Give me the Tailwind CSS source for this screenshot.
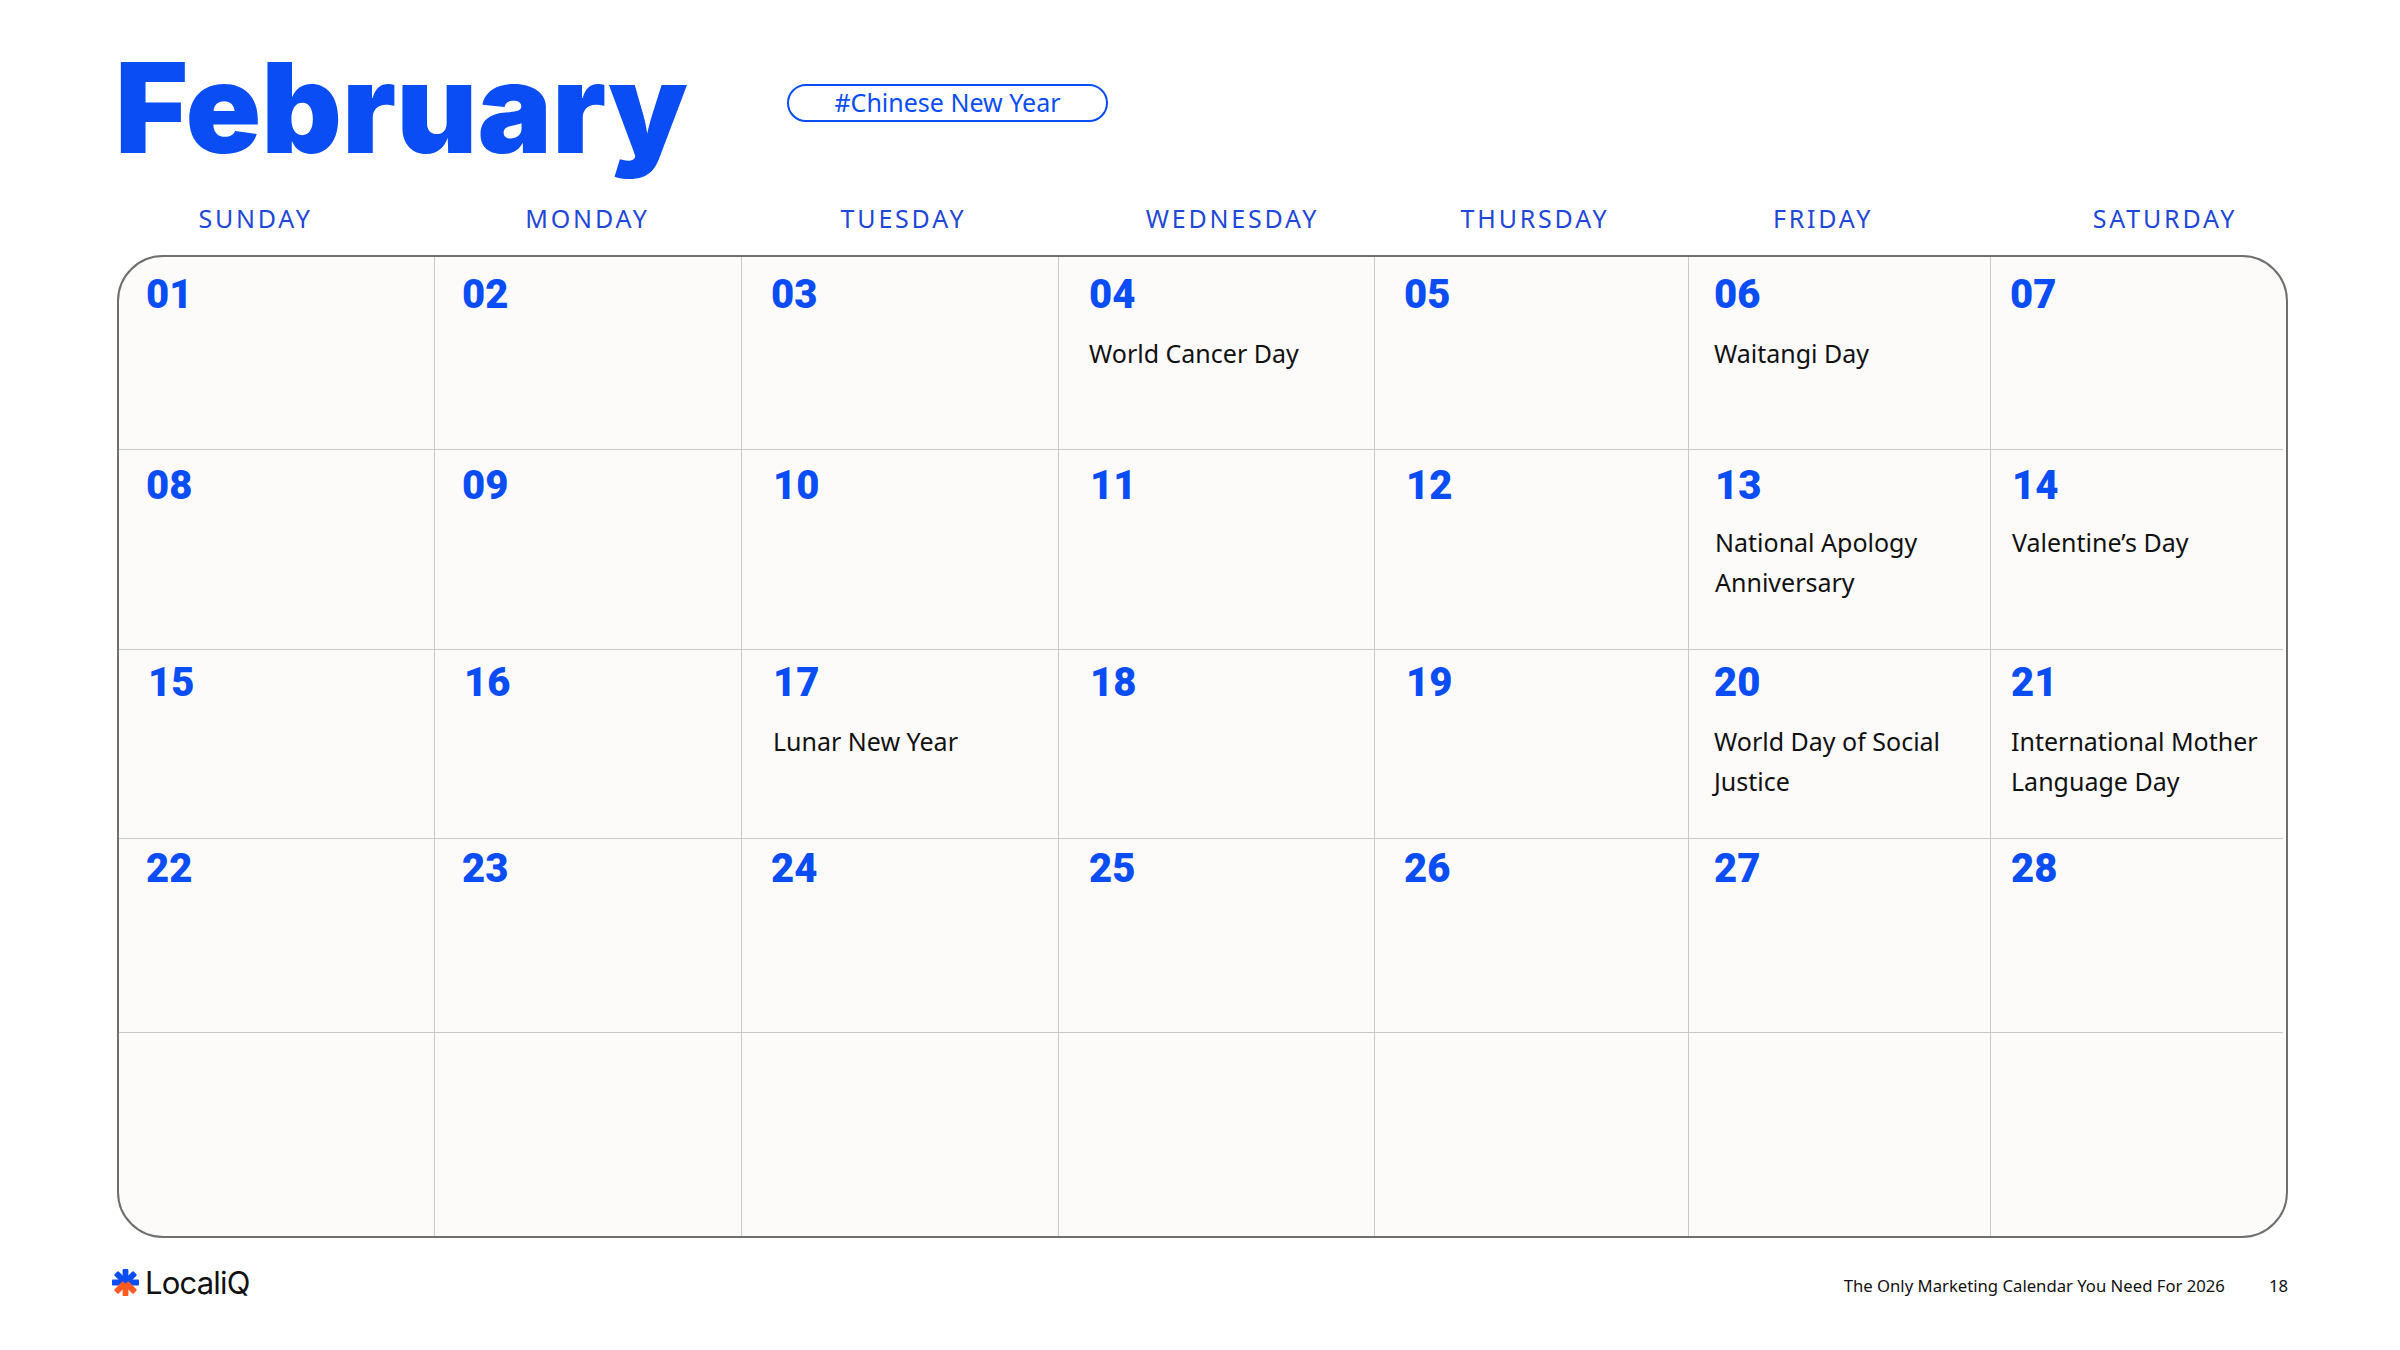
<!DOCTYPE html>
<html><head><meta charset="utf-8"><script src="https://cdn.jsdelivr.net/npm/@tailwindcss/browser@4"></script></head>
<body class="bg-white">
<div class="w-[2400px] h-[1350px] overflow-hidden flex flex-col pl-[117px] pr-[112px] font-['Noto_Sans',sans-serif]">
  <header class="h-[190px] flex items-start shrink-0">
    <h1 class="font-['Inter',sans-serif] font-black text-[125px] leading-none tracking-[0px] text-[#0b4df5] mt-[45px] ml-[-2px] w-[676px]">February</h1>
    <div class="ml-[-4px] mt-[84px] w-[321px] h-[38px] rounded-full border-2 border-[#0b4df5] flex items-center justify-center text-[25px] text-[#0b4df5] font-['Noto_Sans',sans-serif]">#Chinese New Year</div>
  </header>
  <div class="grid grid-cols-[317px_307px_317px_316px_314px_302px_1fr] h-[65px] text-[25px] leading-[36px] tracking-[2.8px] text-[#1f47d8] items-start pt-[10px] text-center">
    <div class="pr-[40px]">SUNDAY</div><div>MONDAY</div><div class="pl-[8px]">TUESDAY</div><div class="pl-[33px]">WEDNESDAY</div><div class="pl-[8px]">THURSDAY</div><div class="pr-[32px]">FRIDAY</div><div class="pl-[52px]">SATURDAY</div>
  </div>
  <main class="h-[983px] w-[2171px] border-2 border-[#6f6f6f] rounded-[46px] bg-[#fcfbfa] overflow-hidden grid grid-cols-[316px_307px_317px_316px_314px_302px_1fr] grid-rows-[193px_200px_189px_194px_1fr] text-[25px] leading-[40px] text-[#111]">
    <!-- row 1 -->
    <div class="border-r border-b border-[#c9c9c9] pl-[27px] pt-[14px]"><p class="text-[40px] leading-[48px] font-black font-['Roboto',sans-serif] text-[#0b4df5]">01</p></div>
    <div class="border-r border-b border-[#c9c9c9] pl-[27px] pt-[14px]"><p class="text-[40px] leading-[48px] font-black font-['Roboto',sans-serif] text-[#0b4df5]">02</p></div>
    <div class="border-r border-b border-[#c9c9c9] pl-[29px] pt-[14px]"><p class="text-[40px] leading-[48px] font-black font-['Roboto',sans-serif] text-[#0b4df5]">03</p></div>
    <div class="border-r border-b border-[#c9c9c9] pl-[30px] pt-[14px]"><p class="text-[40px] leading-[48px] font-black font-['Roboto',sans-serif] text-[#0b4df5]">04</p><p class="mt-[14px]">World Cancer Day</p></div>
    <div class="border-r border-b border-[#c9c9c9] pl-[29px] pt-[14px]"><p class="text-[40px] leading-[48px] font-black font-['Roboto',sans-serif] text-[#0b4df5]">05</p></div>
    <div class="border-r border-b border-[#c9c9c9] pl-[25px] pt-[14px]"><p class="text-[40px] leading-[48px] font-black font-['Roboto',sans-serif] text-[#0b4df5]">06</p><p class="mt-[14px]">Waitangi Day</p></div>
    <div class="pl-[19px] pt-[14px] mr-[3px] border-b border-[#c9c9c9]"><p class="text-[40px] leading-[48px] font-black font-['Roboto',sans-serif] text-[#0b4df5]">07</p></div>
    <!-- row 2 -->
    <div class="border-r border-b border-[#c9c9c9] pl-[27px] pt-[12px]"><p class="text-[40px] leading-[48px] font-black font-['Roboto',sans-serif] text-[#0b4df5]">08</p></div>
    <div class="border-r border-b border-[#c9c9c9] pl-[27px] pt-[12px]"><p class="text-[40px] leading-[48px] font-black font-['Roboto',sans-serif] text-[#0b4df5]">09</p></div>
    <div class="border-r border-b border-[#c9c9c9] pl-[31px] pt-[12px]"><p class="text-[40px] leading-[48px] font-black font-['Roboto',sans-serif] text-[#0b4df5]">10</p></div>
    <div class="border-r border-b border-[#c9c9c9] pl-[31px] pt-[12px]"><p class="text-[40px] leading-[48px] font-black font-['Roboto',sans-serif] text-[#0b4df5]">11</p></div>
    <div class="border-r border-b border-[#c9c9c9] pl-[31px] pt-[12px]"><p class="text-[40px] leading-[48px] font-black font-['Roboto',sans-serif] text-[#0b4df5]">12</p></div>
    <div class="border-r border-b border-[#c9c9c9] pl-[26px] pt-[12px]"><p class="text-[40px] leading-[48px] font-black font-['Roboto',sans-serif] text-[#0b4df5]">13</p><p class="mt-[12px]">National Apology<br>Anniversary</p></div>
    <div class="pl-[21px] pt-[12px] mr-[3px] border-b border-[#c9c9c9]"><p class="text-[40px] leading-[48px] font-black font-['Roboto',sans-serif] text-[#0b4df5]">14</p><p class="mt-[12px]">Valentine’s Day</p></div>
    <!-- row 3 -->
    <div class="border-r border-b border-[#c9c9c9] pl-[29px] pt-[9px]"><p class="text-[40px] leading-[48px] font-black font-['Roboto',sans-serif] text-[#0b4df5]">15</p></div>
    <div class="border-r border-b border-[#c9c9c9] pl-[29px] pt-[9px]"><p class="text-[40px] leading-[48px] font-black font-['Roboto',sans-serif] text-[#0b4df5]">16</p></div>
    <div class="border-r border-b border-[#c9c9c9] pl-[31px] pt-[9px]"><p class="text-[40px] leading-[48px] font-black font-['Roboto',sans-serif] text-[#0b4df5]">17</p><p class="mt-[14px]">Lunar New Year</p></div>
    <div class="border-r border-b border-[#c9c9c9] pl-[31px] pt-[9px]"><p class="text-[40px] leading-[48px] font-black font-['Roboto',sans-serif] text-[#0b4df5]">18</p></div>
    <div class="border-r border-b border-[#c9c9c9] pl-[31px] pt-[9px]"><p class="text-[40px] leading-[48px] font-black font-['Roboto',sans-serif] text-[#0b4df5]">19</p></div>
    <div class="border-r border-b border-[#c9c9c9] pl-[25px] pt-[9px]"><p class="text-[40px] leading-[48px] font-black font-['Roboto',sans-serif] text-[#0b4df5]">20</p><p class="mt-[14px]">World Day of Social<br>Justice</p></div>
    <div class="pl-[20px] pt-[9px] mr-[3px] border-b border-[#c9c9c9]"><p class="text-[40px] leading-[48px] font-black font-['Roboto',sans-serif] text-[#0b4df5]">21</p><p class="mt-[14px]">International Mother<br>Language Day</p></div>
    <!-- row 4 -->
    <div class="border-r border-b border-[#c9c9c9] pl-[27px] pt-[6px]"><p class="text-[40px] leading-[48px] font-black font-['Roboto',sans-serif] text-[#0b4df5]">22</p></div>
    <div class="border-r border-b border-[#c9c9c9] pl-[27px] pt-[6px]"><p class="text-[40px] leading-[48px] font-black font-['Roboto',sans-serif] text-[#0b4df5]">23</p></div>
    <div class="border-r border-b border-[#c9c9c9] pl-[29px] pt-[6px]"><p class="text-[40px] leading-[48px] font-black font-['Roboto',sans-serif] text-[#0b4df5]">24</p></div>
    <div class="border-r border-b border-[#c9c9c9] pl-[30px] pt-[6px]"><p class="text-[40px] leading-[48px] font-black font-['Roboto',sans-serif] text-[#0b4df5]">25</p></div>
    <div class="border-r border-b border-[#c9c9c9] pl-[29px] pt-[6px]"><p class="text-[40px] leading-[48px] font-black font-['Roboto',sans-serif] text-[#0b4df5]">26</p></div>
    <div class="border-r border-b border-[#c9c9c9] pl-[25px] pt-[6px]"><p class="text-[40px] leading-[48px] font-black font-['Roboto',sans-serif] text-[#0b4df5]">27</p></div>
    <div class="pl-[20px] pt-[6px] mr-[3px] border-b border-[#c9c9c9]"><p class="text-[40px] leading-[48px] font-black font-['Roboto',sans-serif] text-[#0b4df5]">28</p></div>
    <!-- row 5 -->
    <div class="border-r border-[#c9c9c9]"></div><div class="border-r border-[#c9c9c9]"></div><div class="border-r border-[#c9c9c9]"></div><div class="border-r border-[#c9c9c9]"></div><div class="border-r border-[#c9c9c9]"></div><div class="border-r border-[#c9c9c9]"></div><div></div>
  </main>
  <footer class="flex items-center justify-between h-[50px] mt-[19px] text-[#111]">
    <div class="flex items-center gap-[6px] ml-[-5px]">
      <svg width="27" height="27" viewBox="0 0 28 28" aria-hidden="true">
        <g fill="#0b4df5"><rect x="0" y="11" width="28" height="6" rx="1"/><rect x="11" y="0" width="6" height="13" rx="1"/><rect x="11" y="0" width="6" height="13" rx="1" transform="rotate(45 14 14)"/><rect x="11" y="0" width="6" height="13" rx="1" transform="rotate(-45 14 14)"/></g>
        <g fill="#fb5a23"><rect x="11" y="15" width="6" height="13" rx="1"/><rect x="11" y="15" width="6" height="13" rx="1" transform="rotate(45 14 14)"/><rect x="11" y="15" width="6" height="13" rx="1" transform="rotate(-45 14 14)"/></g>
      </svg>
      <span class="font-['Inter',sans-serif] font-normal text-[31px] tracking-[-0.8px] leading-none">LocaliQ</span>
    </div>
    <div class="flex items-center text-[16.7px] mt-[7px]"><span>The Only Marketing Calendar You Need For 2026</span><span class="ml-[44px]">18</span></div>
  </footer>
</div>
</body></html>
